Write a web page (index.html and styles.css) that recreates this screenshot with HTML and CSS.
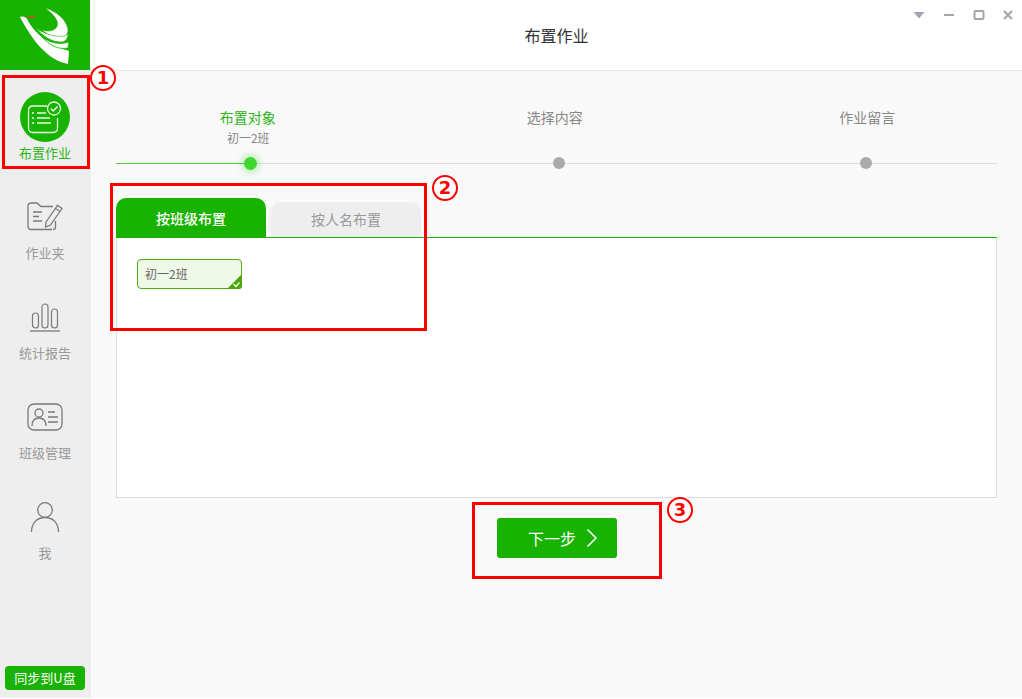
FILE: index.html
```html
<!DOCTYPE html>
<html lang="zh-CN">
<head>
<meta charset="utf-8">
<title>布置作业</title>
<link rel="stylesheet" href="styles.css">
</head>
<body>
<div class="app">
  <aside class="sidebar">
    <div class="logo">
      <svg width="90" height="70" viewBox="0 0 90 70">
        <path d="M20 17 C23 16 26 17 27 19 C31 27 38 35 48 42 C55 46 62 49 69 51 L68 64 C58 62 50 57 42 49 C33 40 26 28 20 17 Z" fill="#fff"/>
        <path d="M42 37 C50 43 60 45 69 42 L68 48 C58 50 49 45 42 37 Z" fill="#fff" stroke="#18b200" stroke-width="0.800"/>
        <path d="M35 27 C42 33 52 37 68 34 C68 38 66 41 63 42 C53 43 43 37 35 27 Z" fill="#fff" stroke="#18b200" stroke-width="0.800"/>
        <path d="M45 8 C56 11 66 19 68 29 C68 33 67 35 64 36 C55 37 47 35 42 30 C48 32 53 31 56 28 C60 23 56 16 45 8 Z" fill="#fff" stroke="#18b200" stroke-width="0.600"/>
        <path d="M25 17 C29 18.500 33 18.500 37 15.500 C33 16 29 16.500 25 17 Z" fill="#c4512a"/>
      </svg>
    </div>
    <nav class="nav">
      <div class="nav-item active">
        <svg class="nav-icon" width="50" height="50" viewBox="0 0 50 50">
          <circle cx="25" cy="25" r="25" fill="#18b200"/>
          <path d="M27 14 H13 Q8.500 14 8.500 18.500 V36 Q8.500 40.500 13 40.500 H33 Q37.500 40.500 37.500 36 V26" fill="none" stroke="#e8f8e0" stroke-width="1.300"/>
          <path d="M12 21 h2 M17 21 h9 M12 26 h2 M17 26 h13 M12 31 h2 M17 31 h14" stroke="#e8f8e0" stroke-width="1.500" fill="none"/>
          <circle cx="34" cy="16.500" r="6.500" fill="#18b200" stroke="#e8f8e0" stroke-width="1.300"/>
          <path d="M30.800 16.500 L33.200 19 L37.500 14.500" fill="none" stroke="#e8f8e0" stroke-width="1.500"/>
        </svg>
        <span>布置作业</span>
      </div>
      <div class="nav-item">
        <svg class="nav-icon" width="36" height="30" viewBox="0 0 36 30">
          <path d="M25 27.500 H4 Q1 27.500 1 24.500 V4 Q1 1 4 1 H10 L14 4.500 H26" fill="none" stroke="#7a7a7a" stroke-width="1.300"/>
          <path d="M28.500 19 V25 Q28.500 27.500 26 27.500" fill="none" stroke="#7a7a7a" stroke-width="1.300"/>
          <path d="M6 10 H15 M6 14.500 H12 M6 19 H15" stroke="#7a7a7a" stroke-width="1.300" fill="none"/>
          <path d="M19 20 L30.500 3.500 L35 6.500 L23.500 23 L18.500 25 Z M28.500 6.500 L33 9.500" fill="none" stroke="#7a7a7a" stroke-width="1.300"/>
        </svg>
        <span>作业夹</span>
      </div>
      <div class="nav-item">
        <svg class="nav-icon" width="30" height="30" viewBox="0 0 30 30">
          <rect x="2.500" y="11" width="6" height="15" rx="3" fill="none" stroke="#7a7a7a" stroke-width="1.200"/>
          <rect x="12" y="2" width="6" height="24" rx="3" fill="none" stroke="#7a7a7a" stroke-width="1.200"/>
          <rect x="21.500" y="7" width="6" height="19" rx="3" fill="none" stroke="#7a7a7a" stroke-width="1.200"/>
          <path d="M0 29 H30" stroke="#7a7a7a" stroke-width="1.300"/>
        </svg>
        <span>统计报告</span>
      </div>
      <div class="nav-item">
        <svg class="nav-icon" width="36" height="30" viewBox="0 0 36 30">
          <rect x="1" y="2" width="34" height="26" rx="6" fill="none" stroke="#7a7a7a" stroke-width="1.300"/>
          <circle cx="12" cy="11" r="4" fill="none" stroke="#7a7a7a" stroke-width="1.300"/>
          <path d="M5 24 C5 18 8 16 12 16 C16 16 19 18 19 24" fill="none" stroke="#7a7a7a" stroke-width="1.300"/>
          <path d="M21 10 H28 M21 15 H31 M21 20 H31" stroke="#7a7a7a" stroke-width="1.600" fill="none"/>
        </svg>
        <span>班级管理</span>
      </div>
      <div class="nav-item">
        <svg class="nav-icon" width="30" height="32" viewBox="0 0 30 32">
          <circle cx="15" cy="9" r="7.300" fill="none" stroke="#7a7a7a" stroke-width="1.300"/>
          <path d="M1.500 31 C1.500 22 7 16.500 15 16.500 C23 16.500 28.500 22 28.500 31" fill="none" stroke="#7a7a7a" stroke-width="1.300"/>
        </svg>
        <span>我</span>
      </div>
    </nav>
    <div class="sync">同步到U盘</div>
  </aside>

  <div class="content">
    <header class="topbar">
      <h1 class="title">布置作业</h1>
      <div class="win-controls">
        <svg width="12" height="8" viewBox="0 0 12 8"><path d="M0.500 1 H11.500 L6 7.500 Z" fill="#a89fb0"/></svg>
        <svg width="12" height="8" viewBox="0 0 12 8"><path d="M1 4 H11" stroke="#a89fb0" stroke-width="2"/></svg>
        <svg width="12" height="10" viewBox="0 0 12 10"><rect x="1.500" y="1" width="9" height="8" rx="1" fill="none" stroke="#a89fb0" stroke-width="2"/></svg>
        <svg width="10" height="10" viewBox="0 0 10 10"><path d="M1 1 L9 9 M9 1 L1 9" stroke="#a89fb0" stroke-width="2"/></svg>
      </div>
    </header>

    <main class="main">
      <div class="steps">
        <div class="track"><div class="track-done"></div></div>
        <div class="step current">
          <div class="step-name name-a">布置对象</div>
          <div class="step-sub">初一2班</div>
          <div class="dot"></div>
        </div>
        <div class="step">
          <div class="step-name name-b">选择内容</div>
          <div class="step-sub"></div>
          <div class="dot"></div>
        </div>
        <div class="step">
          <div class="step-name name-c">作业留言</div>
          <div class="step-sub"></div>
          <div class="dot"></div>
        </div>
      </div>

      <div class="tabs">
        <div class="tab on">按班级布置</div>
        <div class="tab">按人名布置</div>
      </div>
      <section class="panel">
        <div class="chip">
          <span>初一2班</span>
          <svg class="chip-mark" width="15" height="15" viewBox="0 0 15 15">
            <path d="M15 0 V12 Q15 15 12 15 H0 Z" fill="#4ea60c"/>
            <path d="M6.500 10 L9 12.500 L12.500 8.500" fill="none" stroke="#fff" stroke-width="1.200"/>
          </svg>
        </div>
      </section>
      <div class="actions">
        <button class="next" type="button">
          <span>下一步</span>
          <svg width="12" height="20" viewBox="0 0 12 20"><path d="M1.500 1.500 L10 10 L1.500 18.500" fill="none" stroke="#fff" stroke-width="1.500"/></svg>
        </button>
      </div>
    </main>
  </div>

  <div class="mark mark-1"></div>
  <div class="mark mark-2"></div>
  <div class="mark mark-3"></div>
  <div class="num num-1">1</div>
  <div class="num num-2">2</div>
  <div class="num num-3">3</div>
</div>
</body>
</html>
```
FILE: styles.css
```css
* { box-sizing: border-box; }
html, body { margin: 0; padding: 0; height: 100%; overflow: hidden; }
body {
  font-family: "Noto Sans CJK SC", "Liberation Sans", sans-serif;
  color: #333;
  background: #fff;
}
.app {
  position: relative;
  display: flex;
  width: 1022px;
  height: 698px;
}

/* sidebar */
.sidebar {
  position: relative;
  flex: 0 0 91px;
  display: flex;
  flex-direction: column;
  background: #eeeeee;
}
.logo {
  width: 90px;
  height: 70px;
  background: #18b200;
  flex: none;
}
.logo svg { display: block; }
.nav { display: flex; flex-direction: column; flex: 1; }
.nav-item {
  height: 100px;
  display: flex;
  flex-direction: column;
  align-items: center;
  font-size: 13px;
  line-height: 18px;
  color: #999;
  position: relative;
  padding: 74px 1px 0 0;
}
.nav-item .nav-icon { position: absolute; left: 50%; top: 47px; transform: translate(-50%, -50%); margin-left: -0.500px; }
.nav-item.active { color: #2cb418; }
.sync {
  margin: 0 6px 8px 5px;
  height: 24px;
  border-radius: 4px;
  background: #18b200;
  color: #fff;
  font-size: 13px;
  line-height: 24px;
  text-align: center;
}

/* top bar */
.content { flex: 1; display: flex; flex-direction: column; min-width: 0; }
.topbar {
  position: relative;
  height: 71px;
  flex: none;
  background: #fff;
  border-bottom: 1px solid #e6e6e6;
  display: flex;
  align-items: center;
  justify-content: center;
}
.title { margin: 0; font-size: 16px; font-weight: 400; color: #333; }
.win-controls {
  position: absolute;
  top: 10px;
  right: 9px;
  display: flex;
  align-items: center;
  gap: 18px;
}
.win-controls svg { display: block; }

/* main */
.main {
  flex: 1;
  background: #f9f9f9;
  padding: 0 25px;
  display: flex;
  flex-direction: column;
}
.steps {
  position: relative;
  display: grid;
  grid-template-columns: repeat(3, 307.500px);
  margin: 0 -23.500px 0 -18.500px;
  padding-top: 37px;
  height: 127px;
}
.track {
  position: absolute;
  left: 18.500px;
  width: 881px;
  top: 92px;
  height: 1px;
  background: #dddddd;
}
.track-done { width: 135px; height: 1px; background: #4cc83a; }
.step { position: relative; display: flex; flex-direction: column; align-items: center; }
.step-name { font-size: 14px; line-height: 18px; color: #888; }
.name-a { margin-right: 7px; }
.name-b { margin-right: 8px; }
.name-c { margin-left: 2px; }
.step-sub { font-size: 12px; line-height: 18px; height: 18px; margin: 3px 6px 0 0; color: #888; }
.dot {
  width: 12px;
  height: 12px;
  border-radius: 50%;
  background: #aaaaaa;
  margin-top: 10px;
}
.current .step-name { color: #2cb418; }
.current .dot {
  background: #3fd62e;
  width: 13px;
  height: 13px;
  margin-right: 1px;
  box-shadow: 0 0 6px 3px rgba(63, 214, 46, 0.300);
}

/* tabs */
.tabs {
  display: flex;
  align-items: flex-end;
  gap: 5px;
  height: 40px;
  border-bottom: 1px solid #18b200;
}
.tab {
  width: 150px;
  height: 35px;
  border-radius: 10px 10px 0 0;
  background: #eeeeee;
  color: #999;
  font-size: 14px;
  line-height: 35px;
  text-align: center;
}
.tab.on {
  height: 40px;
  margin-bottom: -1px;
  background: #18b200;
  color: #fff;
  font-weight: 500;
  line-height: 41px;
}

/* panel */
.panel {
  height: 260px;
  flex: none;
  background: #fff;
  border: 1px solid #dddddd;
  border-top: 0;
  padding: 21px 20px;
}
.chip {
  position: relative;
  width: 105px;
  height: 30px;
  padding-left: 7px;
  border: 1px solid #52ad16;
  border-radius: 4px;
  background: #eef8e6;
  color: #666;
  font-size: 12px;
  line-height: 28px;
}
.chip-mark { position: absolute; right: -1px; bottom: -1px; }

/* actions */
.actions { display: flex; justify-content: center; padding-top: 20px; }
.next {
  width: 120px;
  height: 40px;
  display: flex;
  align-items: center;
  justify-content: center;
  gap: 10px;
  padding: 0 0 0 13px;
  border: 0;
  border-radius: 3px;
  background: #18b200;
  color: #fff;
  font: inherit;
  font-size: 16px;
}

/* annotations */
.mark { position: absolute; border: 3px solid #ff0000; background: transparent; }
.mark-1 { left: 2px; top: 75px; width: 88px; height: 94px; }
.mark-2 { left: 110px; top: 183px; width: 317px; height: 148px; }
.mark-3 { left: 472px; top: 502px; width: 190px; height: 77px; }
.num {
  position: absolute;
  width: 26px;
  height: 26px;
  border: 2px solid #ff0000;
  border-radius: 50%;
  background: #fff;
  color: #ff0000;
  font-family: "DejaVu Sans", sans-serif;
  font-size: 18px;
  font-weight: 700;
  line-height: 21px;
  text-align: center;
}
.num-1 { left: 90px; top: 65px; }
.num-2 { left: 432px; top: 175px; }
.num-3 { left: 667px; top: 497px; }
```
